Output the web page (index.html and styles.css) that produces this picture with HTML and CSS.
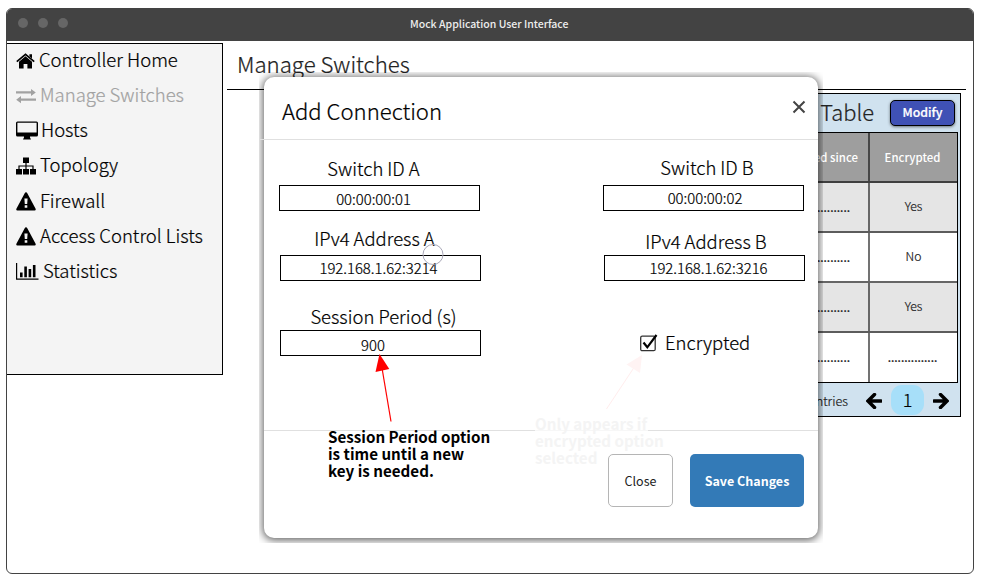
FILE: index.html
```html
<!DOCTYPE html>
<html lang="en">
<head>
<meta charset="utf-8">
<title>Mock Application User Interface</title>
<link rel="stylesheet" href="styles.css">
</head>
<body>
<div class="window">
  <header class="titlebar">
    <div class="dots"><i></i><i></i><i></i></div>
    <span class="app-title">Mock Application User Interface</span>
  </header>
  <div class="body">
    <nav class="sidebar">
      <a class="item home"><svg width="19" height="16" viewBox="0 0 19 16"><path d="M9.500 3.200L3 8.800V15.500H7.600V11H11.400V15.500H16V8.800Z"/><path d="M.8 8.700L9.500 1.300L18.200 8.700" fill="none" stroke="#000" stroke-width="1.700"/><path d="M13.400 1.200H16V5.500L13.400 3.200Z"/></svg><span>Controller Home</span></a>
      <a class="item active"><svg width="20" height="16" viewBox="0 0 20 16"><path d="M0 3.300H15V.9L19.800 4.500L15 8V5.600H0ZM20 10.400H5V8L.2 11.700L5 15.300V12.700H20Z"/></svg><span>Manage Switches</span></a>
      <a class="item hosts"><svg width="22" height="19" viewBox="0 0 22 19"><path fill-rule="evenodd" d="M1.500 .5H20.500Q22 .5 22 2V14Q22 15.500 20.500 15.500H14V16.500L15 18.500H7L8 16.500V15.500H1.500Q0 15.500 0 14V2Q0 .5 1.500 .5ZM1.400 1.700V11.500H20.600V1.700Z"/></svg><span>Hosts</span></a>
      <a class="item topology"><svg width="20" height="18" viewBox="0 0 20 18"><path d="M7 .5H13V6H7ZM0 12H6V17.500H0ZM7 12H13V17.500H7ZM14 12H20V17.500H14Z"/><path d="M10 6V12M3 12V9H17V12" fill="none" stroke="#000" stroke-width="1.200"/></svg><span>Topology</span></a>
      <a class="item"><svg width="20" height="19" viewBox="0 0 20 19"><path fill-rule="evenodd" d="M10 .3Q10.800 .3 11.300 1.200L19.600 16.800Q20.200 18.500 18.600 18.500H1.400Q-.2 18.500 .4 16.800L8.700 1.200Q9.200 .3 10 .3ZM8.400 6.500L8.800 12H11.200L11.600 6.500ZM8.700 13.300V15.800H11.300V13.300Z"/></svg><span>Firewall</span></a>
      <a class="item acl"><svg width="20" height="19" viewBox="0 0 20 19"><path fill-rule="evenodd" d="M10 .3Q10.800 .3 11.300 1.200L19.600 16.800Q20.200 18.500 18.600 18.500H1.400Q-.2 18.500 .4 16.800L8.700 1.200Q9.200 .3 10 .3ZM8.400 6.500L8.800 12H11.200L11.600 6.500ZM8.700 13.300V15.800H11.300V13.300Z"/></svg><span>Access Control Lists</span></a>
      <a class="item stats"><svg width="23" height="17" viewBox="0 0 23 17"><path d="M0 0H1.200V15.600H22.500V16.800H0ZM4 9.500H6.600V14.200H4ZM8.300 3.500H10.900V14.200H8.300ZM12.600 6H15.200V14.200H12.600ZM16.900 2H19.500V14.200H16.900Z"/></svg><span>Statistics</span></a>
    </nav>
    <main class="content">
      <h1 class="page-title">Manage Switches</h1>
      <section class="panel">
        <div class="panel-head"><h2>Table</h2><button class="modify">Modify</button></div>
        <div class="table">
          <div class="row head"><span>Connected since</span><span>Encrypted</span></div>
          <div class="row odd"><span class="fill">...............</span><span>Yes</span></div>
          <div class="row"><span class="fill">...............</span><span>No</span></div>
          <div class="row odd"><span class="fill">...............</span><span>Yes</span></div>
          <div class="row last"><span class="fill">...............</span><span class="fill">...............</span></div>
        </div>
        <div class="pager">
          <span>entries</span>
          <svg width="16" height="16" viewBox="0 0 16 16"><path d="M15 8H3M8.500 1.600L2 8L8.500 14.400"/></svg>
          <b class="page">1</b>
          <svg width="16" height="16" viewBox="0 0 16 16"><path d="M1 8H13M7.500 1.600L14 8L7.500 14.400"/></svg>
        </div>
      </section>
    </main>
  </div>
</div>

<div class="modal">
  <div class="dialog">
    <div class="dialog-head"><h2>Add Connection</h2><svg width="14" height="14" viewBox="0 0 14 14"><path d="M1.500 1.500L12.500 12.500M12.500 1.500L1.500 12.500"/></svg></div>
    <div class="form">
      <div class="col col-a">
        <label class="sw-a">Switch ID A</label><div class="input in-sw-a">00:00:00:01</div>
        <label class="ip-a">IPv4 Address A</label><div class="input in-ip-a">192.168.1.62:3214</div>
        <label class="session">Session Period (s)</label><div class="input in-session">900</div>
      </div>
      <div class="col col-b">
        <label class="sw-b">Switch ID B</label><div class="input in-sw-b">00:00:00:02</div>
        <label class="ip-b">IPv4 Address B</label><div class="input in-ip-b">192.168.1.62:3216</div>
        <div class="check"><svg width="19" height="19" viewBox="0 0 19 19"><rect x="1.700" y="3.200" width="14.500" height="14.500" rx="1.500" fill="none" stroke="#333" stroke-width="1.300"/><path d="M4.500 9.500L8.300 14.300L17.500 2" fill="none" stroke="#000" stroke-width="2.200"/></svg><span>Encrypted</span></div>
      </div>
    </div>
    <div class="dialog-foot"><button class="close">Close</button><button class="save">Save Changes</button></div>
  </div>
  <svg class="marks" width="564" height="471" viewBox="259 72 564 471">
    <path d="M535 430.500H648" stroke="#f7f7f7" stroke-width="1"/>
    <path d="M391 421.500L382 368" stroke="red" stroke-width="1.200"/><path d="M379.500 354L389.300 369L375.500 372Z" fill="red"/>
    <path d="M606.500 409L635 366" stroke="#ffeded" stroke-width="1"/><path d="M642 355L640 373L626.500 364.500Z" fill="#fff3f3"/>
    <circle cx="433" cy="254.500" r="10" fill="none" stroke="#a9a8b8" stroke-width="1"/>
  </svg>
  <p class="note">Session Period option<br>is time until a new<br>key is needed.</p>
  <p class="note faint">Only appears if<br>encrypted option<br>selected</p>
</div>
</body>
</html>
```
FILE: styles.css
```css
* { box-sizing: border-box; }
body { margin: 0; width: 983px; height: 585px; overflow: hidden; background: #fff; color: #000; position: relative; padding: 8px 0 0 6px; font-family: "Noto Sans CJK SC", "Noto Sans", sans-serif; font-weight: 300; -webkit-text-stroke: .22px; }
h1, h2, p { margin: 0; font-weight: 300; }
button { font-family: inherit; padding: 0; }
svg { display: block; flex: none; }

.window { width: 968px; height: 566px; border: 1px solid #434343; border-radius: 6px; overflow: hidden; }
.titlebar { height: 32px; background: #434343; display: flex; align-items: center; position: relative; }
.dots { display: flex; gap: 10px; padding: 0 0 4px 10.500px; }
.dots i { width: 10px; height: 10px; border-radius: 50%; background: #666; }
.app-title { margin-left: 342.500px; color: #eee; font-size: 10.500px; font-weight: 500; line-height: 16px; padding-bottom: 2px; white-space: nowrap; -webkit-text-stroke: 0; }
.body { display: flex; padding-top: 2px; }

.sidebar { width: 217px; height: 332px; margin-left: -1px; border: 1px solid #000; background: #f4f4f4; display: flex; flex-direction: column; }
.item { height: 35.200px; display: flex; align-items: center; gap: 4px; padding: 0 0 2px 9px; font-size: 18.500px; line-height: 24px; white-space: nowrap; }
.item span { padding-bottom: 3.500px; }
.active { color: #a2a2a2; fill: #a2a2a2; }
.hosts { gap: 3px; }

.content { flex: 1; display: flex; flex-direction: column; }
.page-title { height: 47px; margin: 0 7px 0 4px; padding-left: 10px; border-bottom: 1px solid #000; font-size: 22.200px; line-height: 40px; color: #222; }
.panel { width: 400px; height: 324px; margin: 3px 12px 0 auto; border: 1px solid #000; background: #d0e2ef; padding-right: 2px; }
.panel-head { height: 38px; display: flex; justify-content: flex-end; align-items: center; gap: 16px; padding-right: 3px; }
.panel-head h2 { color: #222; font-size: 21.900px; line-height: 28px; padding-bottom: 2px; }
.modify { width: 65px; height: 26px; background: #3f51b5; border: 1px solid #000; border-radius: 5px; box-shadow: 0 1px 3px rgba(0,0,0,.5); color: #fff; font-size: 12.300px; font-weight: 500; line-height: 20px; padding-bottom: 2px; }
.table { border: 1px solid #000; border-left: 0; }
.row { height: 50px; display: grid; grid-template-columns: 1fr 89px; border-bottom: 2px solid rgba(0,0,0,.6); background: #fff; font-size: 12.200px; color: #222; }
.row.odd { background: #e5e5e5; }
.row.head { background: #9e9e9e; color: #fff; font-size: 11.400px; font-weight: 500; -webkit-text-stroke: 0; }
.row.last { height: 49px; border-bottom: 0; }
.row span { line-height: 46px; text-align: center; padding-left: 2px; }
.row.head span { line-height: 48px; padding-left: 0; }
.row span:first-child { text-align: right; padding-right: 10px; border-right: 2px solid rgba(0,0,0,.55); margin-right: -2px; }
.row .fill, .row span.fill:first-child { font-weight: 400; font-size: 11.900px; line-height: 48px; color: #222; padding-left: 0; }
.row span.fill:first-child { padding-right: 18px; }
.pager { height: 34px; display: flex; align-items: center; justify-content: flex-end; padding-right: 9px; font-size: 12.700px; color: #222; }
.pager svg { fill: none; stroke: #000; stroke-width: 3.500; stroke-linecap: round; margin: 1px 0 0 18px; }
.page { width: 33px; height: 30px; margin: 0 -9px 0 9px; border-radius: 11px; background: #a7dff9; color: #000; font-size: 18px; font-weight: 300; line-height: 29px; text-align: center; }

.modal { position: absolute; left: 259px; top: 72px; width: 564px; height: 471px; padding: 5px; overflow: hidden; }
.dialog { width: 554px; height: 461px; border-radius: 10px; background: #fff; box-shadow: 0 1px 9px 1px rgba(0,0,0,.65); }
.dialog-head { height: 63px; margin-left: -4px; border-bottom: 1px solid #e0e0e0; display: flex; align-items: center; justify-content: space-between; padding: 6px 12px 0 22px; }
.dialog-head h2 { font-size: 22.100px; line-height: 30px; padding-bottom: 2px; }
.dialog-head svg { margin-bottom: 8px; stroke: #444; stroke-width: 2; }
.form { height: 291px; display: flex; justify-content: space-between; padding: 0 13px 0 15px; border-bottom: 1px solid #e0e0e0; font-size: 18.450px; }
.col { display: flex; flex-direction: column; width: 202px; }
.col-a { padding-top: 16px; }
.col-b { padding-top: 15px; }
label { display: block; height: 26px; line-height: 24px; text-align: center; white-space: nowrap; }
.input { width: 201px; height: 26px; border: 1px solid #000; font-size: 14.850px; line-height: 23px; text-align: center; white-space: nowrap; }
.in-ip-a, .in-session, .in-ip-b { margin-left: 1px; }
.sw-a { margin-bottom: 3px; padding-right: 13px; }
.in-sw-a { padding-right: 12px; line-height: 25px; }
.ip-a { margin: 15px 0 3px; padding-right: 11px; }
.in-ip-a { padding-right: 4px; }
.session { margin-top: 23px; padding-left: 7px; }
.in-session { padding-right: 15px; line-height: 27px; }
.sw-b { margin-bottom: 4px; padding-left: 6px; }
.in-ip-b { padding-left: 8px; }
.in-sw-b { padding-left: 3px; }
.ip-b { margin-top: 18px; padding-left: 4px; }
.check { display: flex; align-items: center; gap: 7px; height: 30px; margin: 46px 0 0 36px; }
.check span { line-height: 26px; padding-bottom: 1px; }
.dialog-foot { display: flex; justify-content: flex-end; gap: 17px; padding: 23px 14px 0 0; }
.dialog-foot button { height: 53px; border-radius: 5px; font-size: 12.500px; line-height: 50px; }
.close { width: 65px; border: 1px solid #b5b5b5; background: #fff; color: #222; font-weight: 400; -webkit-text-stroke: 0; }
.save { width: 114px; border: 0; background: #337ab7; color: #fff; font-weight: 700; -webkit-text-stroke: 0; }
.marks { position: absolute; left: 0; top: 0; }
.note { position: absolute; left: 69px; top: 356px; font-size: 15.180px; font-weight: 700; line-height: 17px; white-space: nowrap; -webkit-text-stroke: 0; }
.note.faint { left: 276px; top: 343px; color: #f4f4f4; }
```
